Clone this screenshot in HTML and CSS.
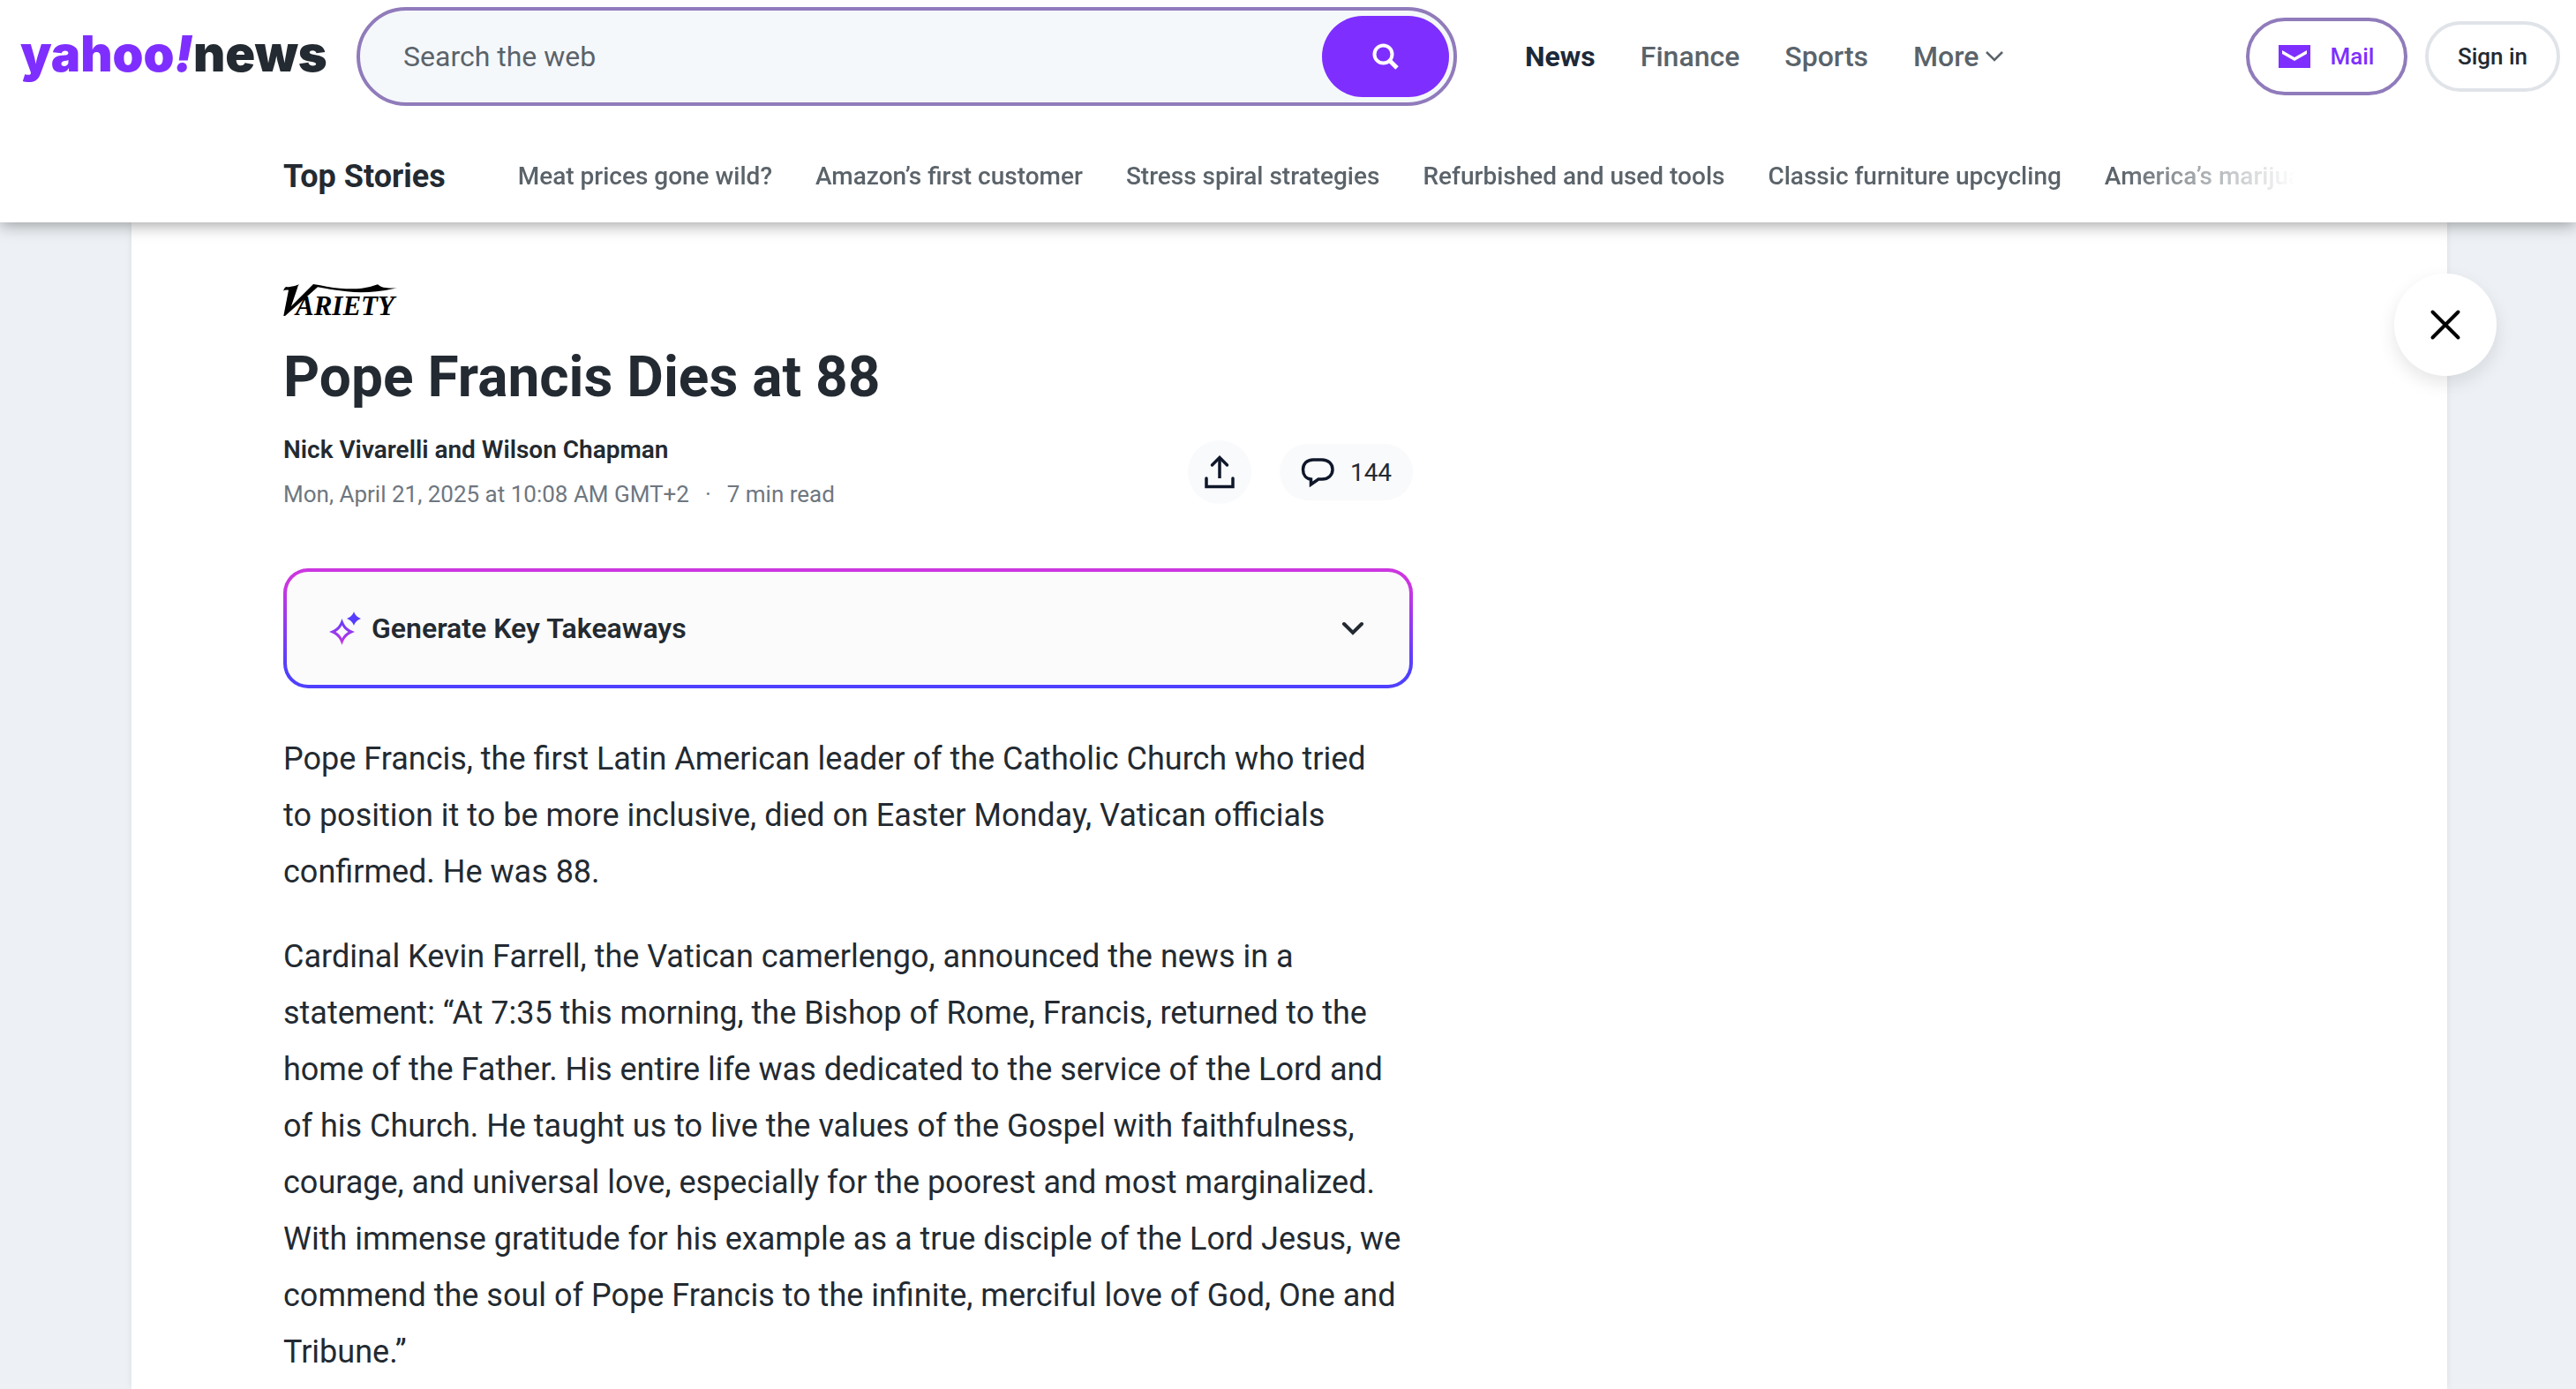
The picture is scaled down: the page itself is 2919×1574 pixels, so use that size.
FILE: index.html
```html
<!DOCTYPE html>
<html lang="en">
<head>
<meta charset="utf-8">
<meta name="viewport" content="width=device-width, initial-scale=1">
<title>Pope Francis Dies at 88</title>
<link rel="stylesheet" href="styles.css">
</head>
<body>
<header class="site-header">
  <div class="top-bar">
    <a class="brand" href="#"><span class="brand-main">yahoo</span><span class="brand-bang">!</span><span class="brand-section">news</span></a>
    <form class="search" role="search">
      <input class="search-input" type="text" placeholder="Search the web" aria-label="Search the web">
      <button class="search-button" type="submit" aria-label="Search">
        <svg width="30" height="30" viewBox="0 0 30 30" fill="none" stroke="#fff" stroke-width="4"><circle cx="12.500" cy="12.500" r="10"/><path d="M19.500 19.500 28 28" stroke-width="5"/></svg>
      </button>
    </form>
    <nav class="site-nav" aria-label="Sections">
      <a class="site-link current" href="#">News</a>
      <a class="site-link" href="#">Finance</a>
      <a class="site-link" href="#">Sports</a>
      <button class="more" type="button">More
        <svg width="20" height="12" viewBox="0 0 20 12" fill="none" stroke="currentColor" stroke-width="2.600"><path d="M1 1l9 9 9-9"/></svg>
      </button>
    </nav>
    <div class="account">
      <a class="pill pill-mail" href="#">
        <svg width="36" height="26" viewBox="0 0 36 26"><path fill="#7e2fff" d="M0 0h36v26H0z"/><path fill="#fff" d="M4 6l14 8 14-8v4l-14 8-14-8z"/></svg>
        Mail
      </a>
      <a class="pill pill-sign" href="#">Sign in</a>
    </div>
  </div>
  <nav class="stories" aria-label="Top Stories">
    <strong class="stories-title">Top Stories</strong>
    <div class="stories-list">
      <a href="#">Meat prices gone wild?</a>
      <a href="#">Amazon’s first customer</a>
      <a href="#">Stress spiral strategies</a>
      <a href="#">Refurbished and used tools</a>
      <a href="#">Classic furniture upcycling</a>
      <a href="#">America’s marijuana</a>
    </div>
  </nav>
</header>
<main class="sheet">
  <button class="close" type="button" aria-label="Close">
    <svg width="36" height="36" viewBox="0 0 36 36" fill="none" stroke="#000" stroke-width="4" stroke-linecap="round"><path d="M3.500 3.500l29 29M32.500 3.500l-29 29"/></svg>
  </button>
  <article class="article">
    <a class="publisher" href="#" aria-label="Variety">
      <svg width="132" height="40" viewBox="0 0 132 40">
        <path d="M0 9.500Q1 6 3 5Q10 6 18 2.300Q16 4 15.700 7.300L9 27L34 2Q42 3 49 4.700Q72 8.500 89 6.700Q99 5.500 107 2.300Q111 6 116 6Q123 7 129 6.300Q118 9 105.700 10.300Q88 12 72 10.300Q54 8.500 39 5.300L2 38H.3L6 8.700Q3 8 0 9.500z"/>
        <text class="publisher-name" x="14" y="37">ARIETY</text>
      </svg>
    </a>
    <h1 class="headline">Pope Francis Dies at 88</h1>
    <div class="meta">
      <div class="credits">
        <p class="byline">Nick Vivarelli and Wilson Chapman</p>
        <p class="dateline"><time datetime="2025-04-21T10:08+02:00">Mon, April 21, 2025 at 10:08 AM GMT+2</time><span>·</span><span>7 min read</span></p>
      </div>
      <div class="tools">
        <button class="share" type="button" aria-label="Share">
          <svg width="36" height="38" viewBox="0 0 36 38" fill="none" stroke="#0f172a" stroke-width="3.500" stroke-linecap="round"><path d="M18 26V3" stroke-linecap="butt"/><path d="M9.500 11L18 2.500 26.500 11M3 26v9.500h30V26"/></svg>
        </button>
        <button class="comments" type="button" aria-label="144 comments">
          <svg width="38" height="34" viewBox="0 0 38 34" fill="none" stroke="#0f172a" stroke-width="3.500"><path d="M14 3h10c7 0 12 4.500 12 11s-5 11-12 11h-4l-8.500 6v-6C6 24.500 2.500 20 2.500 14 2.500 7.500 7 3 14 3z"/></svg>
          144
        </button>
      </div>
    </div>
    <button class="takeaways" type="button">
      <svg width="36" height="38" viewBox="0 0 36 38">
        <defs>
          <linearGradient id="spark-large" x1="0" y1="0" x2="0" y2="1"><stop offset="0" stop-color="#5b3dff"/><stop offset="1" stop-color="#cb36e0"/></linearGradient>
        </defs>
        <path fill="url(#spark-large)" fill-rule="evenodd" d="M14.500 8c2.500 8 6 12 14.500 15-8.500 3-12 7-14.500 15-2.500-8-6-12-14.500-15 8.500-3 12-7 14.500-15zm0 7.500c-1.500 3-4 6-7 7.500 3 1.500 5.500 4.500 7 7.500 1.500-3 4-6 7-7.500-3-1.500-5.500-4.500-7-7.500z"/>
        <path fill="#563dff" d="M28 0c1.500 4 3.500 6 8 8-4.500 2-6.500 4-8 8-1.500-4-3.500-6-8-8 4.500-2 6.500-4 8-8z"/>
      </svg>
      <span class="takeaways-label">Generate Key Takeaways</span>
      <svg width="26" height="16" viewBox="0 0 26 16" fill="none" stroke="#232a31" stroke-width="4" stroke-linecap="round"><path d="M3 3l10 10L23 3"/></svg>
    </button>
    <div class="story">
      <p>Pope Francis, the first Latin American leader of the Catholic Church who tried<br>to position it to be more inclusive, died on Easter Monday, Vatican officials confirmed. He was 88.</p>
      <p>Cardinal Kevin Farrell, the Vatican camerlengo, announced the news in a statement: “At 7:35 this morning, the Bishop of Rome, Francis, returned to the home of the Father. His entire life was dedicated to the service of the Lord and of his Church. He taught us to live the values of the Gospel with faithfulness, courage, and universal love, especially for the poorest and most marginalized. With immense gratitude for his example as a true disciple of the Lord Jesus, we commend the soul of Pope Francis to the infinite, merciful love of God, One and Tribune.”</p>
    </div>
  </article>
</main>
</body>
</html>
```
FILE: styles.css
```css
* {
  box-sizing: border-box;
}

body {
  margin: 0;
  min-height: 100vh;
  display: flex;
  flex-direction: column;
  background: #edf1f5;
  color: #232a31;
  font-family: Roboto, "Liberation Sans", sans-serif;
}

a {
  color: inherit;
  text-decoration: none;
}

button {
  border: 0;
  padding: 0;
  background: none;
  color: inherit;
  font: inherit;
  cursor: pointer;
}

svg {
  flex: none;
  display: block;
}

h1,
p {
  margin: 0;
}

.site-header {
  position: relative;
  z-index: 1;
  background: #fff;
  box-shadow: 0 2px 18px rgba(0, 0, 0, 0.4);
}

/* Top bar */
.top-bar {
  display: flex;
  align-items: center;
  padding: 8px 18px 8px 23px;
}

.brand {
  flex: 0 0 381px;
  display: flex;
  align-items: baseline;
  padding-bottom: 6px;
  font-family: Inter, sans-serif;
  font-size: 56px;
  line-height: 64px;
  font-weight: 900;
}

.brand-main,
.brand-bang {
  color: #7e2fff;
}

.brand-bang {
  font-style: italic;
}

.search {
  flex: 0 1 1247px;
  display: flex;
  height: 112px;
  padding: 6px 5px;
  border: 4px solid #907bbb;
  border-radius: 56px;
  background: #f5f8fb;
}

.search-input {
  flex: 1;
  min-width: 0;
  padding: 0 44px;
  border: 0;
  outline: 0;
  background: none;
  color: #232a31;
  font: 32px Roboto, sans-serif;
}

.search-input::placeholder {
  color: #5b636a;
}

.search-button {
  flex: 0 0 144px;
  display: grid;
  place-items: center;
  border-radius: 46px;
  background: #7e2fff;
}

.site-nav {
  display: flex;
  align-items: center;
  gap: 51px;
  margin-left: 77px;
  color: #5b636a;
  font-size: 32px;
  line-height: 40px;
  font-weight: 500;
}

.current {
  color: #1d2939;
  font-weight: 700;
}

.more {
  display: flex;
  align-items: center;
  gap: 8px;
}

.account {
  display: flex;
  align-items: center;
  gap: 20px;
  margin-left: auto;
  font-size: 26px;
  font-weight: 500;
}

.pill {
  display: flex;
  align-items: center;
  justify-content: center;
  gap: 22px;
  border: 4px solid #e0e4e9;
  border-radius: 44px;
  white-space: nowrap;
}

.pill-mail {
  width: 183px;
  height: 88px;
  border-color: #907bbb;
  color: #7e2fff;
}

.pill-sign {
  width: 153px;
  height: 80px;
}

/* Story links */
.stories {
  display: flex;
  align-items: center;
  gap: 82px;
  padding: 48px 318px 28px 321px;
  white-space: nowrap;
}

.stories-title {
  font-size: 36px;
  line-height: 48px;
}

.stories-list {
  flex: 1;
  min-width: 0;
  display: flex;
  gap: 49px;
  overflow: hidden;
  color: #5b636a;
  font-size: 28px;
  line-height: 48px;
  font-weight: 500;
  mask-image: linear-gradient(to left, transparent, #000 200px);
}

/* Article */
.sheet {
  position: relative;
  flex: 1;
  margin: 0 146px 0 149px;
  padding: 68px 172px 0;
  background: #fff;
  box-shadow: 0 0 8px rgba(0, 0, 0, 0.08);
}

.close {
  position: absolute;
  top: 58px;
  right: -56px;
  width: 116px;
  height: 116px;
  display: grid;
  place-items: center;
  border-radius: 50%;
  background: #fff;
  box-shadow: 0 8px 20px rgba(0, 0, 0, 0.1);
}

.article {
  max-width: 1280px;
}

.publisher {
  display: block;
}

.publisher svg {
  overflow: visible;
}

.publisher-name {
  font: italic 700 31px "Liberation Serif", serif;
}

.headline {
  margin-top: 32px;
  font-size: 64px;
  line-height: 72px;
}

.meta {
  display: flex;
  align-items: center;
  justify-content: space-between;
  margin-top: 28px;
}

.credits {
  display: grid;
  gap: 14px;
  line-height: 36px;
}

.byline {
  font-size: 28px;
  font-weight: 600;
}

.dateline {
  display: flex;
  gap: 18px;
  color: #6e7780;
  font-size: 26px;
}

.tools {
  display: flex;
  align-items: center;
  gap: 32px;
}

.share,
.comments {
  display: flex;
  align-items: center;
  justify-content: center;
  background: #f9fafc;
}

.share {
  width: 72px;
  height: 72px;
  border-radius: 50%;
}

.comments {
  gap: 18px;
  width: 151px;
  height: 64px;
  border-radius: 32px;
  font-size: 28px;
}

.takeaways {
  display: flex;
  align-items: center;
  gap: 12px;
  width: 100%;
  height: 136px;
  margin-top: 66px;
  padding: 0 51px 0 48px;
  border: 4px solid transparent;
  border-radius: 28px;
  background:
    linear-gradient(#fbfbfc, #fbfbfc) padding-box,
    linear-gradient(#cb36e0 15%, #4f40ff 85%) border-box;
  font-size: 32px;
  font-weight: 600;
}

.takeaways-label {
  flex: 1;
  text-align: left;
}

.story {
  display: grid;
  gap: 32px;
  margin-top: 48px;
  font-size: 36px;
  line-height: 64px;
}
```
